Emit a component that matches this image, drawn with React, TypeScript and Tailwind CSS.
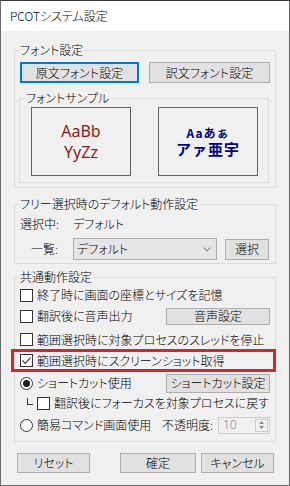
import React from "react";

const JP = "font-['Noto_Sans_CJK_JP','Noto_Sans',sans-serif] [font-feature-settings:'palt']";

function Btn({ children, className = "", focused = false }: { children: React.ReactNode; className?: string; focused?: boolean }) {
  return (
    <button
      type="button"
      className={`flex items-center justify-center shrink-0 bg-[#e1e1e1] text-[12px] leading-none text-black ${
        focused ? "border-2 border-[#0078d7]" : "border border-[#adadad]"
      } ${className}`}
    >
      {children}
    </button>
  );
}

function Check({ checked = false }: { checked?: boolean }) {
  return (
    <span className="w-[13px] h-[13px] border border-[#333333] bg-white flex items-center justify-center shrink-0">
      {checked && (
        <svg width="11" height="11" viewBox="0 0 11 11">
          <path d="M1.5 5.5 L4.2 8.3 L9.6 2.6" stroke="#3c3c3c" strokeWidth="1.2" fill="none" />
        </svg>
      )}
    </span>
  );
}

function Radio({ checked = false }: { checked?: boolean }) {
  return (
    <span className="w-[13px] h-[13px] rounded-full border border-[#333333] bg-white flex items-center justify-center shrink-0">
      {checked && <span className="w-[7px] h-[7px] rounded-full bg-[#1e1e1e]" />}
    </span>
  );
}

export default function App() {
  return (
    <div className={`w-[290px] h-[486px] border border-[#6a6a6a] border-t-[#3a3a3a] flex flex-col bg-[#f0f0f0] overflow-hidden text-[12px] font-light text-black ${JP}`}>
      <div className="h-[30px] shrink-0 bg-white flex items-center pl-[9px] text-[12px]">PCOTシステム設定</div>
      <div className="flex-1 px-[13px] flex flex-col">
        {/* Font settings */}
        <fieldset className="mt-[12px] border border-[#dcdcdc] px-[5px] pb-[4px]">
          <legend className="px-[1px] -ml-[1px] leading-[14px]">フォント設定</legend>
          <div className="mt-[5px] flex justify-between">
            <Btn focused className="w-[119px] h-[21px]">原文フォント設定</Btn>
            <Btn className="w-[121px] h-[21px]">訳文フォント設定</Btn>
          </div>
          <fieldset className="mt-[8px] -ml-[1px] w-[250px] border border-[#dcdcdc] px-[6px] pb-[6px]">
            <legend className="px-[1px] -ml-[1px] leading-[14px]">フォントサンプル</legend>
            <div className="mt-[2px] ml-[5px] flex gap-[27px]">
              <div className="w-[100px] h-[69px] border border-[#646464] flex flex-col items-center justify-center font-['Noto_Sans',sans-serif] font-normal text-[16px] leading-[21px] text-[#8b1c1c]">
                <span>AaBb</span>
                <span>YyZz</span>
              </div>
              <div className="w-[100px] h-[69px] border border-[#646464] flex flex-col items-center justify-center font-['Noto_Sans_CJK_JP',monospace] font-bold text-[#000080] [font-feature-settings:normal]">
                <span className="text-[12px] leading-[15px] tracking-[1px]">Aaあぁ</span>
                <span className="text-[15px] leading-[18px] tracking-[1px]">アァ亜宇</span>
              </div>
            </div>
          </fieldset>
        </fieldset>

        {/* Free selection default */}
        <fieldset className="mt-[9px] border border-[#dcdcdc] px-[5px] pb-[3px]">
          <legend className="px-[1px] -ml-[1px] leading-[14px]">フリー選択時のデフォルト動作設定</legend>
          <div className="mt-[6px] h-[14px] flex items-center leading-[14px]">
            <span className="w-[53px] shrink-0">選択中:</span>
            <span>デフォルト</span>
          </div>
          <div className="mt-[7px] h-[22px] flex items-center">
            <span className="w-[53px] shrink-0 pl-[11px]">一覧:</span>
            <div className="w-[144px] h-[22px] border border-[#adadad] bg-[#e5e5e5] flex items-center pl-[3px] pr-[5px]">
              <span className="flex-1">デフォルト</span>
              <svg width="8" height="5" viewBox="0 0 8 5">
                <path d="M0.5 0.5 L4 4 L7.5 0.5" stroke="#6d6d6d" strokeWidth="1" fill="none" />
              </svg>
            </div>
            <Btn className="ml-[8px] w-[44px] h-[21px]">選択</Btn>
          </div>
        </fieldset>

        {/* Common settings */}
        <fieldset className="mt-[6px] border border-[#dcdcdc] px-[5px] pb-[6px]">
          <legend className="px-[1px] -ml-[1px] leading-[14px]">共通動作設定</legend>
          <div className="mt-[1px] h-[20px] flex items-center gap-[4px]">
            <Check />
            <span>終了時に画面の座標とサイズを記憶</span>
          </div>
          <div className="mt-[1px] h-[20px] flex items-center gap-[4px]">
            <Check />
            <span>翻訳後に音声出力</span>
            <Btn className="ml-auto w-[104px] h-[17px]">音声設定</Btn>
          </div>
          <div className="mt-[4px] h-[19px] flex items-center gap-[4px]">
            <Check />
            <span>範囲選択時に対象プロセスのスレッドを停止</span>
          </div>
          <div className="h-[23px] -ml-[9px] -mr-[6px] border-[3px] border-[#d9232e] pl-[6px] flex items-center gap-[4px]">
            <Check checked />
            <span>範囲選択時にスクリーンショット取得</span>
          </div>
          <div className="mt-[1px] h-[20px] flex items-center gap-[4px]">
            <Radio checked />
            <span>ショートカット使用</span>
            <Btn className="ml-auto w-[104px] h-[19px]">ショートカット設定</Btn>
          </div>
          <div className="h-[20px] flex items-center">
            <span className="ml-[7px] mb-[3px] w-[6px] h-[7px] border-l border-b border-[#333333] shrink-0" />
            <span className="ml-[4px]"><Check /></span>
            <span className="ml-[4px]">翻訳後にフォーカスを対象プロセスに戻す</span>
          </div>
          <div className="mt-[2px] h-[20px] flex items-center gap-[4px]">
            <Radio />
            <span>簡易コマンド画面使用</span>
            <span className="ml-auto mr-[1px]">不透明度:</span>
            <div className="w-[52px] h-[17px] border border-[#cccccc] flex items-center pl-[4px] pr-[1px]">
              <span className="flex-1 text-[#8a8a8a] font-['Noto_Sans',sans-serif] text-[12px] leading-none">10</span>
              <div className="w-[13px] h-[13px] border border-[#cccccc] bg-[#f0f0f0] flex flex-col items-center justify-center gap-[2px]">
                <svg width="5" height="3" viewBox="0 0 5 3"><path d="M0 3 L2.5 0 L5 3 Z" fill="#8a8a8a" /></svg>
                <svg width="5" height="3" viewBox="0 0 5 3"><path d="M0 0 L2.5 3 L5 0 Z" fill="#8a8a8a" /></svg>
              </div>
            </div>
          </div>
        </fieldset>

        {/* Bottom buttons */}
        <div className="mt-[11px] flex">
          <Btn className="ml-[3px] w-[73px] h-[20px]">リセット</Btn>
          <Btn className="ml-[30px] w-[76px] h-[20px]">確定</Btn>
          <Btn className="ml-[5px] w-[73px] h-[20px]">キャンセル</Btn>
        </div>
      </div>
    </div>
  );
}
